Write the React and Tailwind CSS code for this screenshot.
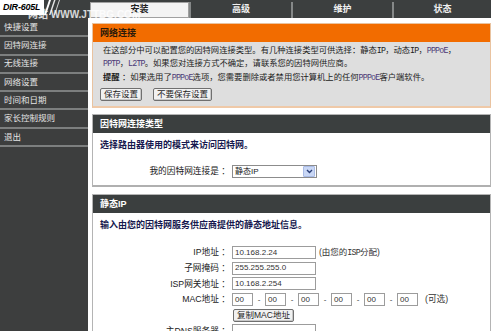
import React from "react";

const sideItems = ["快捷设置", "因特网连接", "无线连接", "网络设置", "时间和日期", "家长控制规则", "退出"];

function Btn({ children, className = "" }) {
  return (
    <div className={"h-[13px] px-[3px] flex items-center bg-[#f1f1f1] border border-[#6f6f6f] rounded-[2px] text-[8.5px] text-[#1e1e1e] leading-none whitespace-nowrap shadow-[inset_-1px_-1px_0_#c8c8c8] " + className}>
      {children}
    </div>
  );
}

function Field({ value, w = "w-[84px]" }) {
  return (
    <div className={w + " h-[13px] border border-[#9c9c9c] bg-white flex items-center pl-[2px] text-[8px] text-[#333] leading-none whitespace-nowrap overflow-hidden"}>
      {value}
    </div>
  );
}

function Row({ label, children }) {
  return (
    <div className="flex items-center h-[13px]">
      <div className="w-[139px] text-right pr-[2px] text-[8.7px] text-[#222] leading-none whitespace-nowrap">{label}</div>
      {children}
    </div>
  );
}

const L = ({ children, c = "" }) => (
  <span className={"font-['Liberation_Mono',monospace] text-[8.3px] tracking-[-0.8px] " + c}>{children}</span>
);

export default function App() {
  const P = ({ children }) => <L c="text-[#4d3a78]">{children}</L>;
  return (
    <div className="relative w-[500px] h-[331px] overflow-hidden bg-white font-['Liberation_Sans','Noto_Sans_CJK_SC',sans-serif]">
      <div className="w-[491px] h-[331px] flex flex-col">
        {/* header */}
        <div className="flex h-[18px] bg-[#3c3f3f] shrink-0">
          <div className="w-[44px] h-[15px] bg-white flex items-center pl-[3px]">
            <span className="italic font-bold text-[9px] text-black leading-none tracking-[-0.2px]">DIR-605L</span>
          </div>
          <svg width="18" height="15" viewBox="0 0 18 15" className="block">
            <rect width="18" height="15" fill="#3c3f3f" />
            <path d="M0 15 L5 0 L7 0 L2 15 Z" fill="#ffffff" />
            <path d="M5 15 L10 0 L11.5 0 L6.5 15 Z" fill="#e6e6e6" />
            <path d="M10 15 L15 0 L16 0 L11 15 Z" fill="#cfcfcf" />
          </svg>
          <div className="w-[28px]" />
          <div className="flex flex-1 h-[18px]">
            <div className="w-[99px] mt-[2px] h-[16px] bg-[#f3f3f3] border border-[#a0a0a0] flex items-center justify-center text-[9px] font-bold text-[#222]">安装</div>
            <div className="w-[102px] border-l-2 border-[#858888] flex items-center justify-center text-[9px] font-bold text-[#f0f0f0] mt-[2px]">高级</div>
            <div className="w-[101px] border-l-2 border-[#858888] flex items-center justify-center text-[9px] font-bold text-[#f0f0f0] mt-[2px]">维护</div>
            <div className="flex-1 border-l-2 border-[#858888] flex items-center justify-center text-[9px] font-bold text-[#f0f0f0] mt-[2px]">状态</div>
          </div>
        </div>

        <div className="flex flex-1 min-h-0">
          {/* sidebar */}
          <div className="w-[88px] bg-[#3d3e3e] shrink-0 pt-[1px]">
            {sideItems.map((t) => (
              <div key={t} className="h-[18.3px] border-b-2 border-[#7d7f7f] flex items-center pl-[4px] text-[8.5px] text-[#e4e4e4] leading-none whitespace-nowrap">
                {t}
              </div>
            ))}
          </div>

          {/* content */}
          <div className="flex-1 pl-[4px] min-w-0">
            {/* section 1 */}
            <div className="mt-[5px] border border-[#e9c3a0] border-b-2 border-b-[#efc9a8] bg-[#dedede]">
              <div className="h-[18px] bg-[#f26c00] flex items-center pl-[7px] text-[9px] font-bold text-[#2a1a0a] leading-none">网络连接</div>
              <div className="pl-[10px] pt-[2px] pb-[5px] text-[8.3px] leading-[12px] text-[#222] whitespace-nowrap">
                <div>在这部分中可以配置您的因特网连接类型。有几种连接类型可供选择：静态<L>IP</L>，动态<L>IP</L>，<P>PPPoE</P>，</div>
                <div><P>PPTP</P>，<P>L2TP</P>。如果您对连接方式不确定，请联系您的因特网供应商。</div>
                <div className="mt-[1px]"><span className="font-bold">提醒</span> ：如果选用了<P>PPPoE</P>选项，您需要删除或者禁用您计算机上的任何<P>PPPoE</P>客户端软件。</div>
                <div className="flex gap-[11px] mt-[4px] ml-[-3px]">
                  <Btn>保存设置</Btn>
                  <Btn>不要保存设置</Btn>
                </div>
              </div>
            </div>

            {/* section 2 */}
            <div className="mt-[6px] border border-[#b4b4b4] border-b-2 border-b-[#b0b0b0] bg-white">
              <div className="h-[18px] bg-[#3b3f3f] flex items-center pl-[7px] text-[9px] font-bold text-white leading-none">因特网连接类型</div>
              <div className="pt-[6px] pb-[7px]">
                <div className="pl-[7px] h-[12px] flex items-center text-[9px] font-bold text-[#16184e] leading-none">选择路由器使用的模式来访问因特网。</div>
                <div className="mt-[14px]">
                  <Row label="我的因特网连接是 ：">
                    <div className="w-[85px] h-[13px] border border-[#8c8c8c] bg-white flex items-center justify-between">
                      <span className="pl-[2px] text-[8px] text-[#222] leading-none">静态IP</span>
                      <div className="w-[12px] h-[11px] mr-[1px] bg-[#c9d7f5] border border-[#a9bbe6] rounded-[1px] flex items-center justify-center">
                        <svg width="7" height="5" viewBox="0 0 7 5"><path d="M1 1 L3.5 3.5 L6 1" stroke="#2b3f78" strokeWidth="1.4" fill="none" /></svg>
                      </div>
                    </div>
                  </Row>
                </div>
              </div>
            </div>

            {/* section 3 */}
            <div className="mt-[7px] border border-[#b4b4b4] bg-white">
              <div className="h-[18px] bg-[#3b3f3f] flex items-center pl-[7px] text-[9px] font-bold text-white leading-none">静态IP</div>
              <div className="pt-[6px]">
                <div className="pl-[7px] h-[12px] flex items-center text-[9px] font-bold text-[#16184e] leading-none">输入由您的因特网服务供应商提供的静态地址信息。</div>
                <div className="mt-[15px] flex flex-col gap-[2.7px]">
                  <Row label="IP地址 ：">
                    <Field value="10.168.2.24" />
                    <span className="ml-[3px] text-[8.5px] text-[#333] leading-none whitespace-nowrap">(由您的<L>ISP</L>分配)</span>
                  </Row>
                  <Row label="子网掩码 ：">
                    <Field value="255.255.255.0" />
                  </Row>
                  <Row label="ISP网关地址 ：">
                    <Field value="10.168.2.254" />
                  </Row>
                  <Row label="MAC地址 ：">
                    {[0, 1, 2, 3, 4, 5].map((i) => (
                      <React.Fragment key={i}>
                        {i > 0 && <span className="w-[12px] text-center text-[8px] text-[#333] leading-none">-</span>}
                        <Field value="00" w="w-[21px]" />
                      </React.Fragment>
                    ))}
                    <span className="ml-[7px] text-[8.7px] text-[#333] leading-none whitespace-nowrap">(可选)</span>
                  </Row>
                  <Row label="">
                    <Btn className="ml-[1px]">复制MAC地址</Btn>
                  </Row>
                  <Row label="主DNS服务器 ：">
                    <Field value="" />
                  </Row>
                </div>
              </div>
            </div>
          </div>
        </div>
      </div>

      {/* watermark */}
      <div className="absolute left-[28px] top-[10px] text-[10px] font-bold text-white opacity-80 leading-none whitespace-nowrap pointer-events-none">
        网站 WWW.JTTBG.COM
      </div>
    </div>
  );
}
